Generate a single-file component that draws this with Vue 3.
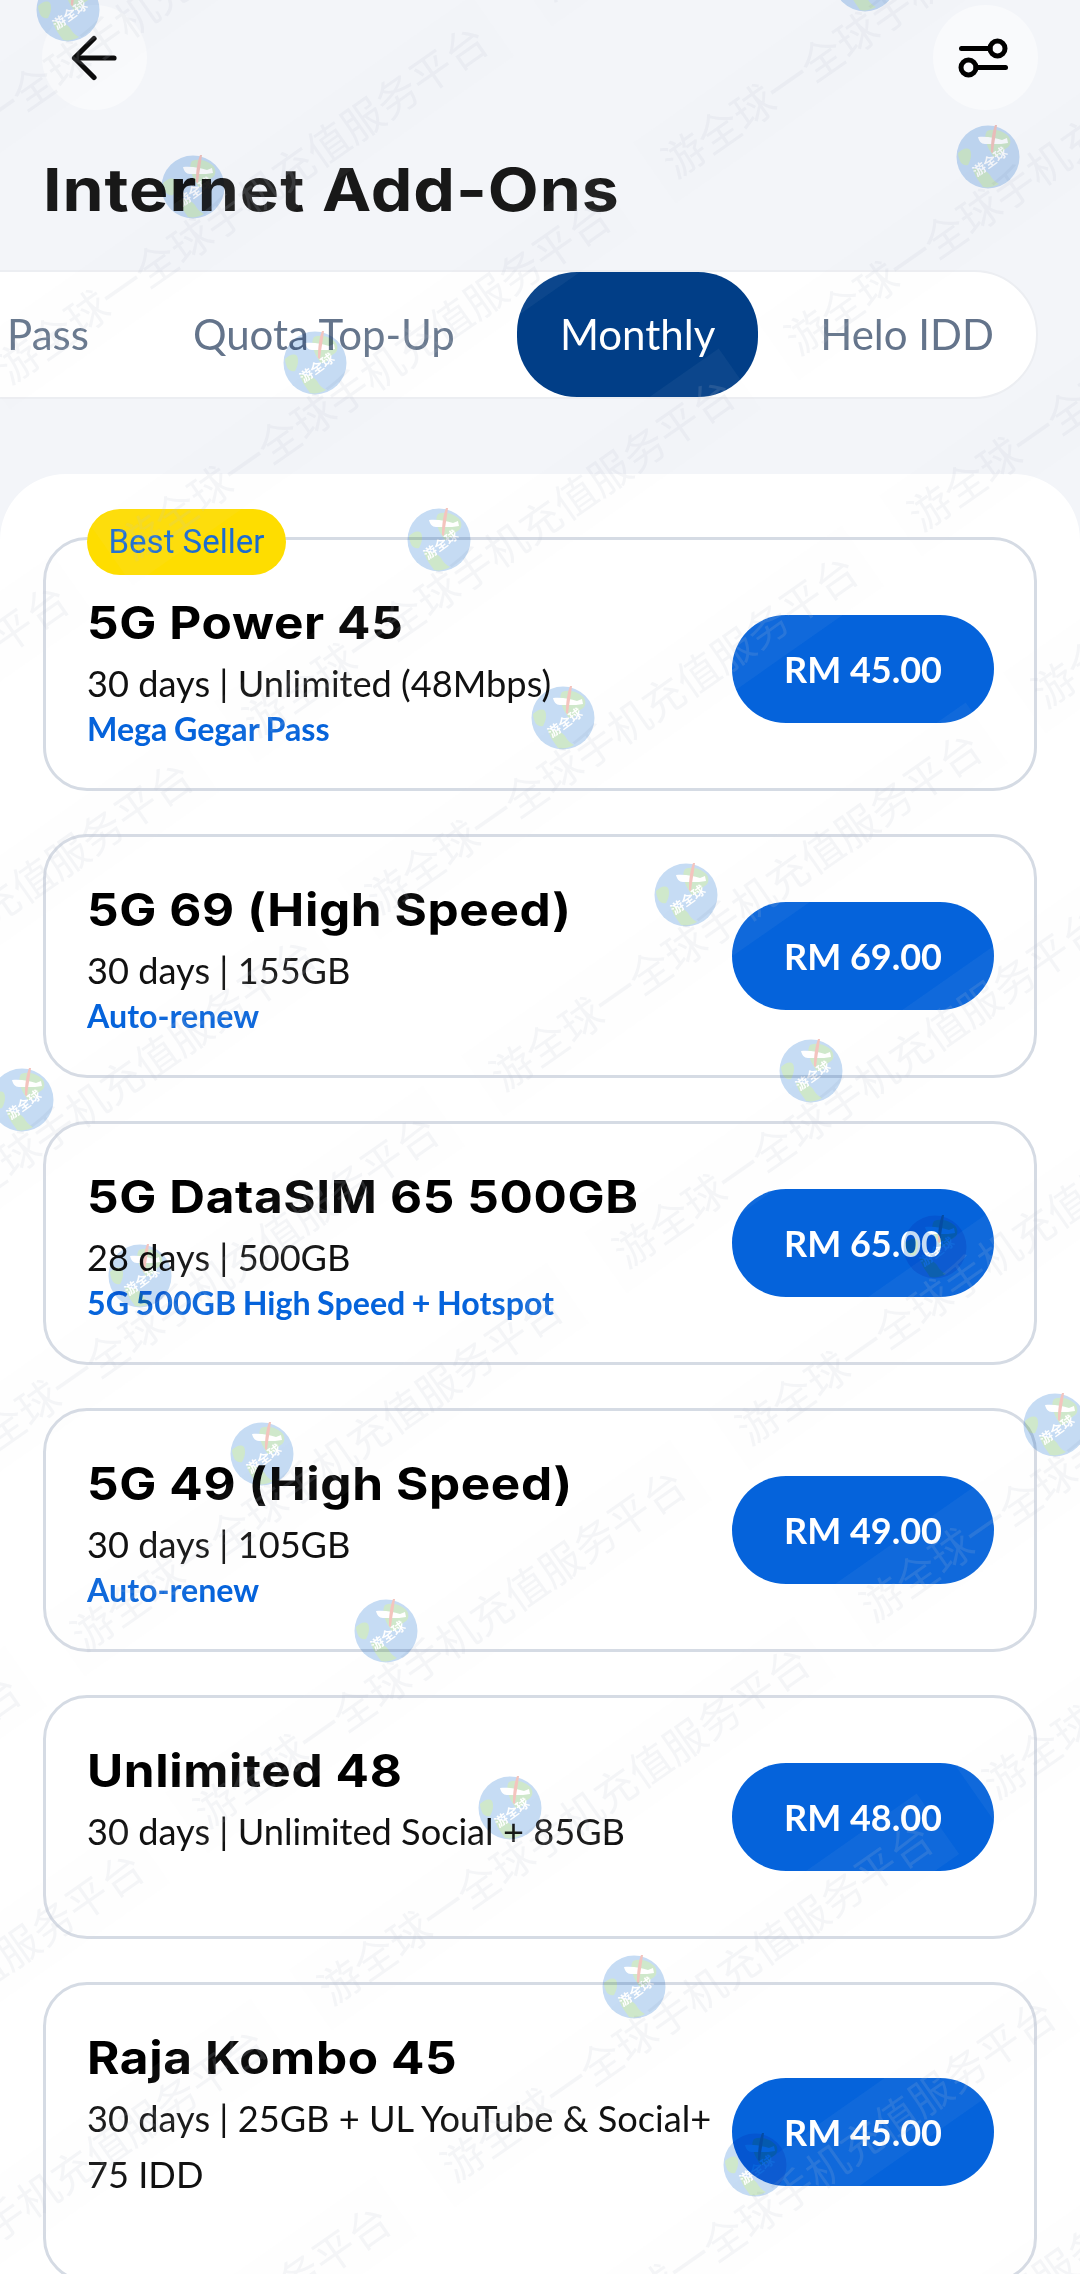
<script setup>
const tabs = [
  { label: 'Pass' },
  { label: 'Quota Top-Up' },
  { label: 'Monthly', active: true },
  { label: 'Helo IDD' }
]

const plans = [
  { name: '5G Power 45', lines: ['30 days | Unlimited (48Mbps)'], tag: 'Mega Gegar Pass', price: 'RM 45.00', badge: 'Best Seller' },
  { name: '5G 69 (High Speed)', lines: ['30 days | 155GB'], tag: 'Auto-renew', price: 'RM 69.00' },
  { name: '5G DataSIM 65 500GB', lines: ['28 days | 500GB'], tag: '5G 500GB High Speed + Hotspot', price: 'RM 65.00' },
  { name: '5G 49 (High Speed)', lines: ['30 days | 105GB'], tag: 'Auto-renew', price: 'RM 49.00' },
  { name: 'Unlimited 48', lines: ['30 days | Unlimited Social + 85GB'], tag: '', price: 'RM 48.00' },
  { name: 'Raja Kombo 45', lines: ['30 days | 25GB + UL YouTube & Social+', '75 IDD'], tag: '', price: 'RM 45.00' }
]

const globes = [
  [68, 10], [865, -20], [193, 187], [988, 157], [315, 363], [439, 540], [563, 718], [686, 895],
  [22, 1100], [811, 1071], [140, 1276], [935, 1247], [262, 1454], [1055, 1425], [386, 1631],
  [510, 1808], [634, 1987], [755, 2165]
].map(([x, y]) => ({ id: `${x}_${y}`, x, y }))

const stepA = { x: 123.4, y: 176.9 }
const stepB = { x: -789, y: 29 }
const strips = []
for (let i = -14; i <= 16; i++) {
  for (let j = -3; j <= 3; j++) {
    const x = Math.round(634 + i * stepA.x + j * stepB.x)
    const y = Math.round(1243 + i * stepA.y + j * stepB.y)
    if (x > -600 && x < 1120 && y > -40 && y < 2700) strips.push({ id: `${i}_${j}`, x, y })
  }
}
</script>

<template>
  <div class="page">
    <header class="topbar">
      <button class="round" aria-label="Back">
        <svg width="48" height="48" viewBox="0 0 48 48" fill="none" stroke="#000" stroke-width="5.200" stroke-linecap="round" stroke-linejoin="round">
          <path d="M43 24H4" />
          <path d="M23 4.500L3.500 24L23 43.500" />
        </svg>
      </button>
      <button class="round" aria-label="Filter">
        <svg width="60" height="44" viewBox="0 0 60 44" fill="none" stroke="#000" stroke-width="5" stroke-linecap="round">
          <path d="M5.500 12.500H34" />
          <circle cx="41.500" cy="12.500" r="7.500" />
          <path d="M20 31.500H49.500" />
          <circle cx="12.500" cy="31.500" r="7.500" />
        </svg>
      </button>
    </header>

    <h1 class="title">Internet Add-Ons</h1>

    <nav class="tabs">
      <span v-for="tab in tabs" :key="tab.label" class="tab" :class="{ active: tab.active }">{{ tab.label }}</span>
    </nav>

    <main class="sheet">
      <article v-for="plan in plans" :key="plan.name" class="card" :class="{ badged: plan.badge }">
        <span v-if="plan.badge" class="badge">{{ plan.badge }}</span>
        <div class="copy">
          <h2 class="name">{{ plan.name }}</h2>
          <p v-for="line in plan.lines" :key="line" class="sub">{{ line }}</p>
          <p class="tag">{{ plan.tag }}</p>
        </div>
        <button class="price">{{ plan.price }}</button>
      </article>
    </main>

    <div class="marks" aria-hidden="true">
      <div
        v-for="s in strips"
        :key="'s' + s.id"
        class="strip"
        :style="{ left: s.x + 'px', top: s.y + 'px' }"
      >游全球一全球手机充值服务平台</div>
      <svg
        v-for="g in globes"
        :key="'g' + g.id"
        class="globe"
        :style="{ left: g.x - 32 + 'px', top: g.y - 32 + 'px' }"
        width="64"
        height="64"
        viewBox="0 0 64 64"
      >
        <circle cx="32" cy="32" r="31.500" fill="#c6dcf4" />
        <path d="M31 6c7-3 17 0 22 6 3 5 1 10-4 12-3 4-6 9-11 8-3-4-7-10-8-16-1-4-1-7 1-10z" fill="#cfe8cb" />
        <path d="M2 28c4-4 9-6 12-3 2 4 1 10-2 15-3 1-7-1-8-4-1-3-2-5-2-8z" fill="#cfe8cb" />
        <path d="M17 44c6-1 13 1 17 6 2 4 5 7 9 9-5 3-11 4-16 3-3-5-8-10-10-18z" fill="#cfe8cb" />
        <path d="M22 12c9-1 17 1 24 3l5-2 1 5-7 1-16 0c-4 0-6-3-7-7z" fill="#fff" />
        <path d="M39 0c-3 8-4 16-4 27l2 1c1-10 3-19 4-28z" fill="#f4c4be" />
        <text x="0" y="0" transform="translate(21 52) rotate(-36)" class="globe-text">游全球</text>
      </svg>
    </div>
  </div>
</template>

<style>
html,
body {
  margin: 0;
  background: #f3f5f9;
}
</style>

<style scoped>
.page {
  position: relative;
  width: 1080px;
  height: 2274px;
  overflow: hidden;
  background: #f3f5f9;
  font-family: "Lato", "Noto Sans", sans-serif;
}

.topbar {
  display: flex;
  justify-content: space-between;
  padding: 5px 42px 0;
}

.round {
  display: flex;
  align-items: center;
  justify-content: center;
  width: 105px;
  height: 105px;
  padding: 0;
  border: 0;
  border-radius: 50%;
  background: #f9fafc;
}

.title {
  margin: 44px 0 0 43px;
  font-family: "Inter", "Noto Sans", sans-serif;
  font-size: 59px;
  line-height: 72px;
  font-weight: 700;
  letter-spacing: 0.850px;
  color: #181818;
  transform: scaleX(1.12);
  transform-origin: left center;
}

.tabs {
  display: flex;
  justify-content: flex-end;
  align-items: center;
  gap: 20px;
  box-sizing: border-box;
  height: 129px;
  margin: 44px 42px 0 -60px;
  padding: 0;
  background: #fff;
  border: 2px solid #eceef2;
  border-radius: 64px;
}

.tab {
  flex: none;
  height: 125px;
  padding: 0 42px;
  font-size: 42px;
  line-height: 125px;
  color: #64748b;
  border-radius: 60px;
}

.tab.active {
  padding: 0 43px;
  background: #013e87;
  color: #fff;
}

.sheet {
  display: flex;
  flex-direction: column;
  gap: 43px;
  margin-top: 75px;
  padding: 63px 43px 0;
  background: #fff;
  border-radius: 66px 66px 0 0;
}

.card {
  position: relative;
  display: flex;
  align-items: center;
  gap: 8px;
  padding: 40px 40px 40px 41px;
  background: #fff;
  border: 3px solid #d5dbe4;
  border-radius: 44px;
}

.card.badged {
  padding-top: 50px;
}

.badge {
  position: absolute;
  left: 41px;
  top: -31px;
  width: 199px;
  height: 66px;
  border-radius: 33px;
  background: #fedd00;
  color: #1b6cd0;
  font-family: "Roboto", sans-serif;
  font-size: 33px;
  line-height: 66px;
  text-align: center;
}

.copy {
  flex: 1;
  min-width: 0;
  padding-top: 1px;
}

.name {
  margin: 0;
  font-family: "Inter", "Noto Sans", sans-serif;
  font-size: 45px;
  line-height: 64px;
  font-weight: 700;
  letter-spacing: 0.550px;
  color: #000;
  white-space: nowrap;
  transform: scaleX(1.1);
  transform-origin: left center;
}

.sub {
  margin: 0;
  font-size: 36.200px;
  line-height: 56px;
  color: #111;
}

.tag {
  margin: -1px 0 0;
  min-height: 38px;
  font-size: 32.200px;
  line-height: 37px;
  font-weight: 700;
  word-spacing: -1.300px;
  color: #0563db;
}

.price {
  flex: none;
  width: 262px;
  height: 108px;
  padding: 0;
  border: 0;
  border-radius: 54px;
  background: #0563db;
  color: #fff;
  font-family: "Lato", sans-serif;
  font-size: 36px;
  font-weight: 700;
}

.marks {
  position: absolute;
  inset: 0;
  overflow: hidden;
  pointer-events: none;
}

.strip {
  position: absolute;
  padding: 8px 14px;
  margin: -37px 0 0 -35px;
  transform: rotate(-35deg);
  transform-origin: 35px 37px;
  background: rgba(226, 229, 236, 0.05);
  color: rgba(190, 196, 208, 0.15);
  font-family: "Noto Sans CJK SC", sans-serif;
  font-size: 42px;
  line-height: 58px;
  white-space: nowrap;
}

.globe {
  position: absolute;
  mix-blend-mode: multiply;
}

.globe-text {
  fill: #fff;
  font-family: "Noto Sans CJK SC", sans-serif;
  font-size: 13px;
  font-weight: 700;
}
</style>
